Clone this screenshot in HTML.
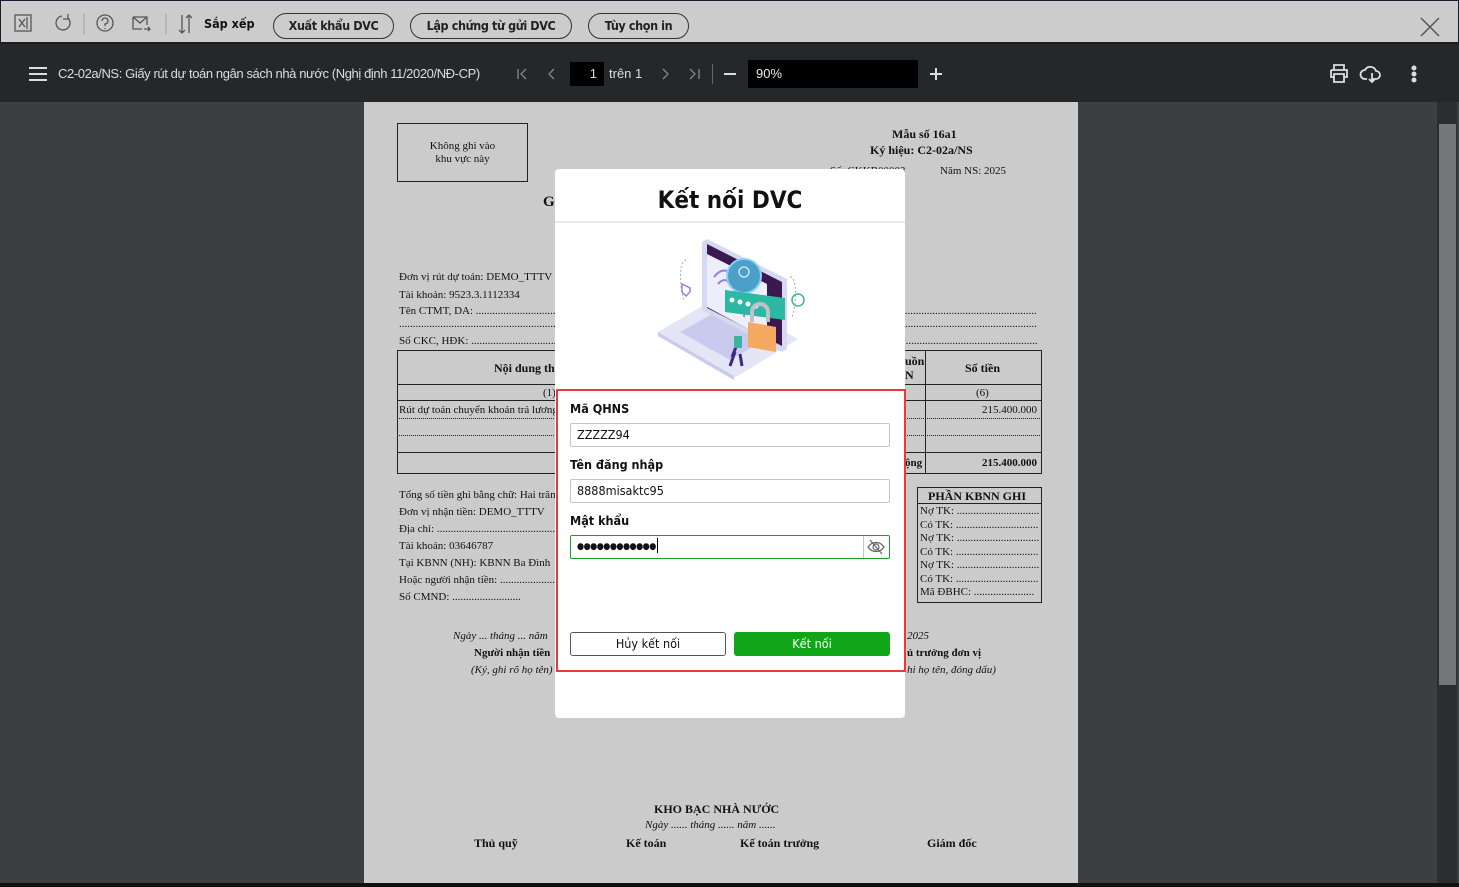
<!DOCTYPE html>
<html><head><meta charset="utf-8"><style>
*{margin:0;padding:0;box-sizing:border-box}
body{width:1459px;height:887px;overflow:hidden;background:#3c3f42;font-family:"Liberation Sans",sans-serif;position:relative}
.a{position:absolute;white-space:nowrap}
.top{left:0;top:0;width:1459px;height:44px;background:#cccccc;border:1px solid #1a1a2e;border-bottom:2px solid #1b1d20}
.btn{position:absolute;top:13px;height:26px;border:1px solid #333;border-radius:13px;font-size:12.5px;font-weight:bold;color:#222;text-align:center;line-height:24px;font-family:"DejaVu Sans Condensed","Liberation Sans",sans-serif;letter-spacing:-0.4px}
.hdr{left:0;top:44px;width:1459px;height:58px;background:#25282b}
.paper{left:364px;top:102px;width:714px;height:781px;background:#cbcbcb}
.s{font-family:"Liberation Serif",serif;font-size:11px;color:#111}
.b{font-weight:bold;font-size:12px}
.i{font-style:italic}
.modal{left:555px;top:169px;width:350px;height:549px;background:#fff;border-radius:4px}
.lbl{font-family:"DejaVu Sans Condensed","Liberation Sans",sans-serif;font-weight:bold;font-size:12.5px;color:#111}
.inp{position:absolute;left:570px;width:320px;height:24px;border:1px solid #c4c4cc;border-radius:2px;font-family:"DejaVu Sans Condensed","Liberation Sans",sans-serif;font-size:12.5px;line-height:22px;padding-left:6px;color:#111}
</style></head><body>
<div class="a top"></div>
<svg class="a" style="left:12px;top:12px" width="260" height="24" viewBox="0 0 260 24" fill="none" stroke="#555" stroke-width="1.3">
<rect x="3" y="3" width="16" height="16"/><path d="M7 7l6 8M13 7l-6 8M15 5v12"/>
<path d="M56 6a7 7 0 1 1-6-2M56 2v5h-5"/>
<line x1="72" y1="2" x2="72" y2="22" stroke="#aaa"/>
<circle cx="93" cy="11" r="8"/><path d="M90 9a3 3 0 1 1 3 3v2M93 16v1"/>
<path d="M121 5h14v8M121 5v12h9M121 5l7 6 7-6M132 17h6M136 15l2 2-2 2"/>
<line x1="154" y1="2" x2="154" y2="22" stroke="#aaa"/>
<path d="M170 3v18M167 18l3 3 3-3M177 21V3M174 6l3-3 3 3"/>
</svg>
<div class="a lbl" style="left:204px;top:16px;font-size:12.5px">Sắp xếp</div>
<div class="btn" style="left:273px;width:121px">Xuất khẩu DVC</div>
<div class="btn" style="left:410px;width:162px">Lập chứng từ gửi DVC</div>
<div class="btn" style="left:588px;width:101px">Tùy chọn in</div>
<svg class="a" style="left:1419px;top:16px" width="22" height="22"><path d="M2 2l18 18M20 2L2 20" stroke="#555" stroke-width="1.5"/></svg>

<div class="a hdr"></div>
<svg class="a" style="left:29px;top:66px" width="18" height="16"><path d="M0 2h18M0 8h18M0 14h18" stroke="#ddd" stroke-width="2"/></svg>
<div class="a" style="left:58px;top:66px;font-size:13px;color:#ddd;letter-spacing:-0.4px">C2-02a/NS: Giấy rút dự toán ngân sách nhà nước (Nghị định 11/2020/NĐ-CP)</div>
<svg class="a" style="left:515px;top:66px" width="190" height="16" fill="none" stroke="#888" stroke-width="1.3"><path d="M3 3v10M11 3l-5 5 5 5M39 3l-5 5 5 5M148 3l5 5-5 5M175 3l5 5-5 5M184 3v10"/></svg>
<div class="a" style="left:570px;top:62px;width:34px;height:24px;background:#000;color:#ddd;font-size:13px;text-align:right;padding-right:7px;line-height:24px">1</div>
<div class="a" style="left:609px;top:66px;color:#ddd;font-size:13px">trên 1</div>
<div class="a" style="left:712px;top:64px;width:1px;height:20px;background:#666"></div>
<div class="a" style="left:724px;top:73px;width:12px;height:2px;background:#ddd"></div>
<div class="a" style="left:748px;top:60px;width:170px;height:28px;background:#000;color:#eee;font-size:13px;line-height:28px;padding-left:8px">90%</div>
<div class="a" style="left:930px;top:73px;width:12px;height:2px;background:#ddd"></div><div class="a" style="left:935px;top:68px;width:2px;height:12px;background:#ddd"></div>
<svg class="a" style="left:1328px;top:62px" width="100" height="24" fill="none" stroke="#ddd" stroke-width="1.8"><path d="M6 8V3h10v5M3 8h16v7h-3M6 15H3V8M6 12h10v8H6z"/><path d="M44 17h4a4 4 0 0 0 0-8 6 6 0 0 0-11-1 4.5 4.5 0 0 0 0 9h2M44 11v9M41 17l3 3 3-3"/><circle cx="86" cy="6" r="1.6" fill="#ddd"/><circle cx="86" cy="12" r="1.6" fill="#ddd"/><circle cx="86" cy="18" r="1.6" fill="#ddd"/></svg>
<div class="a" style="left:1437px;top:102px;width:20px;height:781px;background:#2b2e31"></div>
<div class="a" style="left:1439px;top:124px;width:17px;height:561px;background:#767779"></div>
<div class="a" style="left:0;top:883px;width:1459px;height:4px;background:#111"></div>

<div class="a paper"></div>
<div class="a" style="left:397px;top:123px;width:131px;height:59px;border:1px solid #222"></div>
<div class="a s" style="left:397px;top:140px;width:131px;text-align:center;white-space:normal;line-height:13px">Không ghi vào<br>khu vực này</div>
<div class="a s b" style="left:892px;top:127px">Mẫu số 16a1</div>
<div class="a s b" style="left:870px;top:143px">Ký hiệu: C2-02a/NS</div>
<div class="a s" style="left:830px;top:165px">Số: CKKB00003</div>
<div class="a s" style="left:940px;top:165px">Năm NS: 2025</div>
<div class="a s b" style="left:543px;top:194px;font-size:15px">G</div>
<div class="a s" style="left:399px;top:271px">Đơn vị rút dự toán: DEMO_TTTV</div>
<div class="a s" style="left:399px;top:289px">Tài khoản: 9523.3.1112334</div>
<div class="a s" style="left:399px;top:305px;width:638px;overflow:hidden">Tên CTMT, DA: ............................................................................................................................................................................................................................................</div>
<div class="a s" style="left:399px;top:318px;width:638px;overflow:hidden">........................................................................................................................................................................................................................................................</div>
<div class="a s" style="left:399px;top:335px;width:638px;overflow:hidden">Số CKC, HĐK: .............................................................................................................................................................................................................................................</div>
<div class="a" style="left:397px;top:350px;width:645px;height:124px;border:1px solid #222"></div>
<div class="a" style="left:397px;top:384px;width:645px;height:1px;background:#222"></div>
<div class="a" style="left:397px;top:400px;width:645px;height:1px;background:#222"></div>
<div class="a" style="left:397px;top:418px;width:645px;border-top:1px dotted #222"></div>
<div class="a" style="left:397px;top:435px;width:645px;border-top:1px dotted #222"></div>
<div class="a" style="left:397px;top:452px;width:645px;height:1px;background:#222"></div>
<div class="a" style="left:925px;top:350px;width:1px;height:124px;background:#222"></div>
<div class="a s b" style="left:494px;top:361px">Nội dung thanh toán</div>
<div class="a s b" style="left:905px;top:354px">uồn</div><div class="a s b" style="left:905px;top:368px">N</div>
<div class="a s b" style="left:965px;top:361px">Số tiền</div>
<div class="a s" style="left:543px;top:387px">(1)</div><div class="a s" style="left:976px;top:387px">(6)</div>
<div class="a s" style="left:399px;top:404px">Rút dự toán chuyển khoản trả lương</div>
<div class="a s" style="left:982px;top:404px">215.400.000</div>
<div class="a s b" style="left:905px;top:457px;font-size:11px">ộng</div>
<div class="a s b" style="left:982px;top:457px;font-size:11px">215.400.000</div>
<div class="a s" style="left:399px;top:489px">Tổng số tiền ghi bằng chữ: Hai trăm</div>
<div class="a s" style="left:399px;top:506px">Đơn vị nhận tiền: DEMO_TTTV</div>
<div class="a s" style="left:399px;top:523px">Địa chỉ: .............................................</div>
<div class="a s" style="left:399px;top:540px">Tài khoản: 03646787</div>
<div class="a s" style="left:399px;top:557px">Tại KBNN (NH): KBNN Ba Đình</div>
<div class="a s" style="left:399px;top:574px">Hoặc người nhận tiền: ..........................</div>
<div class="a s" style="left:399px;top:591px">Số CMND: .........................</div>
<div class="a" style="left:917px;top:487px;width:125px;height:116px;border:1px solid #222"></div>
<div class="a" style="left:917px;top:503px;width:125px;height:1px;background:#222"></div>
<div class="a s b" style="left:928px;top:489px">PHẦN KBNN GHI</div>
<div class="a s" style="left:920px;top:505px;line-height:13.5px;white-space:pre;width:120px;overflow:hidden">Nợ TK: ..............................
Có TK: ..............................
Nợ TK: ..............................
Có TK: ..............................
Nợ TK: ..............................
Có TK: ..............................
Mã ĐBHC: ......................</div>
<div class="a s i" style="left:453px;top:630px">Ngày ... tháng ... năm</div>
<div class="a s b" style="left:474px;top:647px;font-size:11px">Người nhận tiền</div>
<div class="a s i" style="left:471px;top:664px">(Ký, ghi rõ họ tên)</div>
<div class="a s i" style="left:907px;top:630px">2025</div>
<div class="a s b" style="left:907px;top:647px;font-size:11px">ủ trưởng đơn vị</div>
<div class="a s i" style="left:907px;top:664px">hi họ tên, đóng dấu)</div>
<div class="a s b" style="left:654px;top:802px">KHO BẠC NHÀ NƯỚC</div>
<div class="a s i" style="left:645px;top:819px">Ngày ...... tháng ...... năm ......</div>
<div class="a s b" style="left:474px;top:836px">Thủ quỹ</div>
<div class="a s b" style="left:626px;top:836px">Kế toán</div>
<div class="a s b" style="left:740px;top:836px">Kế toán trưởng</div>
<div class="a s b" style="left:927px;top:836px">Giám đốc</div>

<div class="a modal"></div>
<div class="a" style="left:555px;top:186px;width:350px;text-align:center;font-family:'DejaVu Sans Condensed','Liberation Sans',sans-serif;font-weight:bold;font-size:24px;color:#111">Kết nối DVC</div>
<div class="a" style="left:555px;top:221px;width:350px;height:2px;background:#ebebeb"></div>
<svg class="a" style="left:640px;top:232px" width="175" height="150" viewBox="0 0 175 150">
<path d="M18 100l60-35 80 42-62 38z" fill="#e4e5f5"/>
<path d="M18 100l76 44v4L18 104z" fill="#c9cbea"/>
<path d="M40 100l45-25 50 27-45 26z" fill="#c8cbee"/>
<path d="M62 10l5-3 80 40v70l-5 3L62 78z" fill="#d7d9f2"/>
<path d="M67 12l75 38v64L67 76z" fill="#3a1850"/>
<path d="M67 22l60 30v55L67 75z" fill="#eceefa"/>
<path d="M74 45c15-20 35 10 30 40" stroke="#9a7be0" fill="none" stroke-width="2"/>
<path d="M78 52c10-12 20 6 20 28" stroke="#9a7be0" fill="none" stroke-width="2"/>
<circle cx="104" cy="44" r="17" fill="#4aa0c8" stroke="#8ed0f0" stroke-width="2"/>
<circle cx="104" cy="40" r="5" fill="none" stroke="#cde" stroke-width="1.5"/>
<path d="M85 58l60 8v22l-60-8z" fill="#2bb9a4"/>
<circle cx="92" cy="68" r="2.5" fill="#fff"/><circle cx="100" cy="70" r="2.5" fill="#fff"/><circle cx="108" cy="72" r="2.5" fill="#fff"/><circle cx="116" cy="74" r="2.5" fill="#fff"/>
<path d="M112 90v-10a8 8 0 0 1 16 0v10" stroke="#c0c0c8" stroke-width="4" fill="none"/>
<path d="M108 90l28 5v25l-28-5z" fill="#f5a860"/>
<path d="M100 105l-8 20M95 120l-5 14M100 122l2 12" stroke="#3a2a80" stroke-width="3"/>
<rect x="94" y="104" width="8" height="12" fill="#3bb5a0"/>
<path d="M46 28c-8 0-6 30-2 40M150 45c8 0 6 30 2 40" stroke="#9ab" stroke-dasharray="2 2" fill="none"/>
<path d="M42 52l8 4v4l-4 4-4-4z" fill="none" stroke="#9a7be0" stroke-width="1.5"/>
<circle cx="158" cy="68" r="6" fill="none" stroke="#3bb5a0" stroke-width="1.5"/>
</svg>
<div class="a" style="left:556px;top:389px;width:350px;height:283px;border:2px solid #e8393c"></div>
<div class="a lbl" style="left:570px;top:401px">Mã QHNS</div>
<div class="inp" style="top:423px">ZZZZZ94</div>
<div class="a lbl" style="left:570px;top:457px">Tên đăng nhập</div>
<div class="inp" style="top:479px">8888misaktc95</div>
<div class="a lbl" style="left:570px;top:513px">Mật khẩu</div>
<div class="inp" style="top:535px;border-color:#1aa02a;font-size:9px;letter-spacing:-0.5px">●●●●●●●●●●●●<span style="display:inline-block;width:1px;height:15px;background:#000;vertical-align:-4px;margin-left:1px"></span></div>
<div class="a" style="left:863px;top:536px;width:1px;height:22px;background:#c4c4cc"></div>
<svg class="a" style="left:866px;top:538px" width="20" height="18" fill="none" stroke="#666" stroke-width="1.2"><path d="M2 9c4-6 12-6 16 0-4 6-12 6-16 0z"/><circle cx="10" cy="9" r="3"/><path d="M4 2l12 14"/></svg>
<div class="a lbl" style="left:570px;top:632px;width:156px;height:24px;border:1px solid #555;border-radius:3px;text-align:center;line-height:22px;font-weight:normal">Hủy kết nối</div>
<div class="a lbl" style="left:734px;top:632px;width:156px;height:24px;background:#10a617;border-radius:3px;text-align:center;line-height:24px;color:#fff;font-weight:normal">Kết nối</div>
</body></html>
